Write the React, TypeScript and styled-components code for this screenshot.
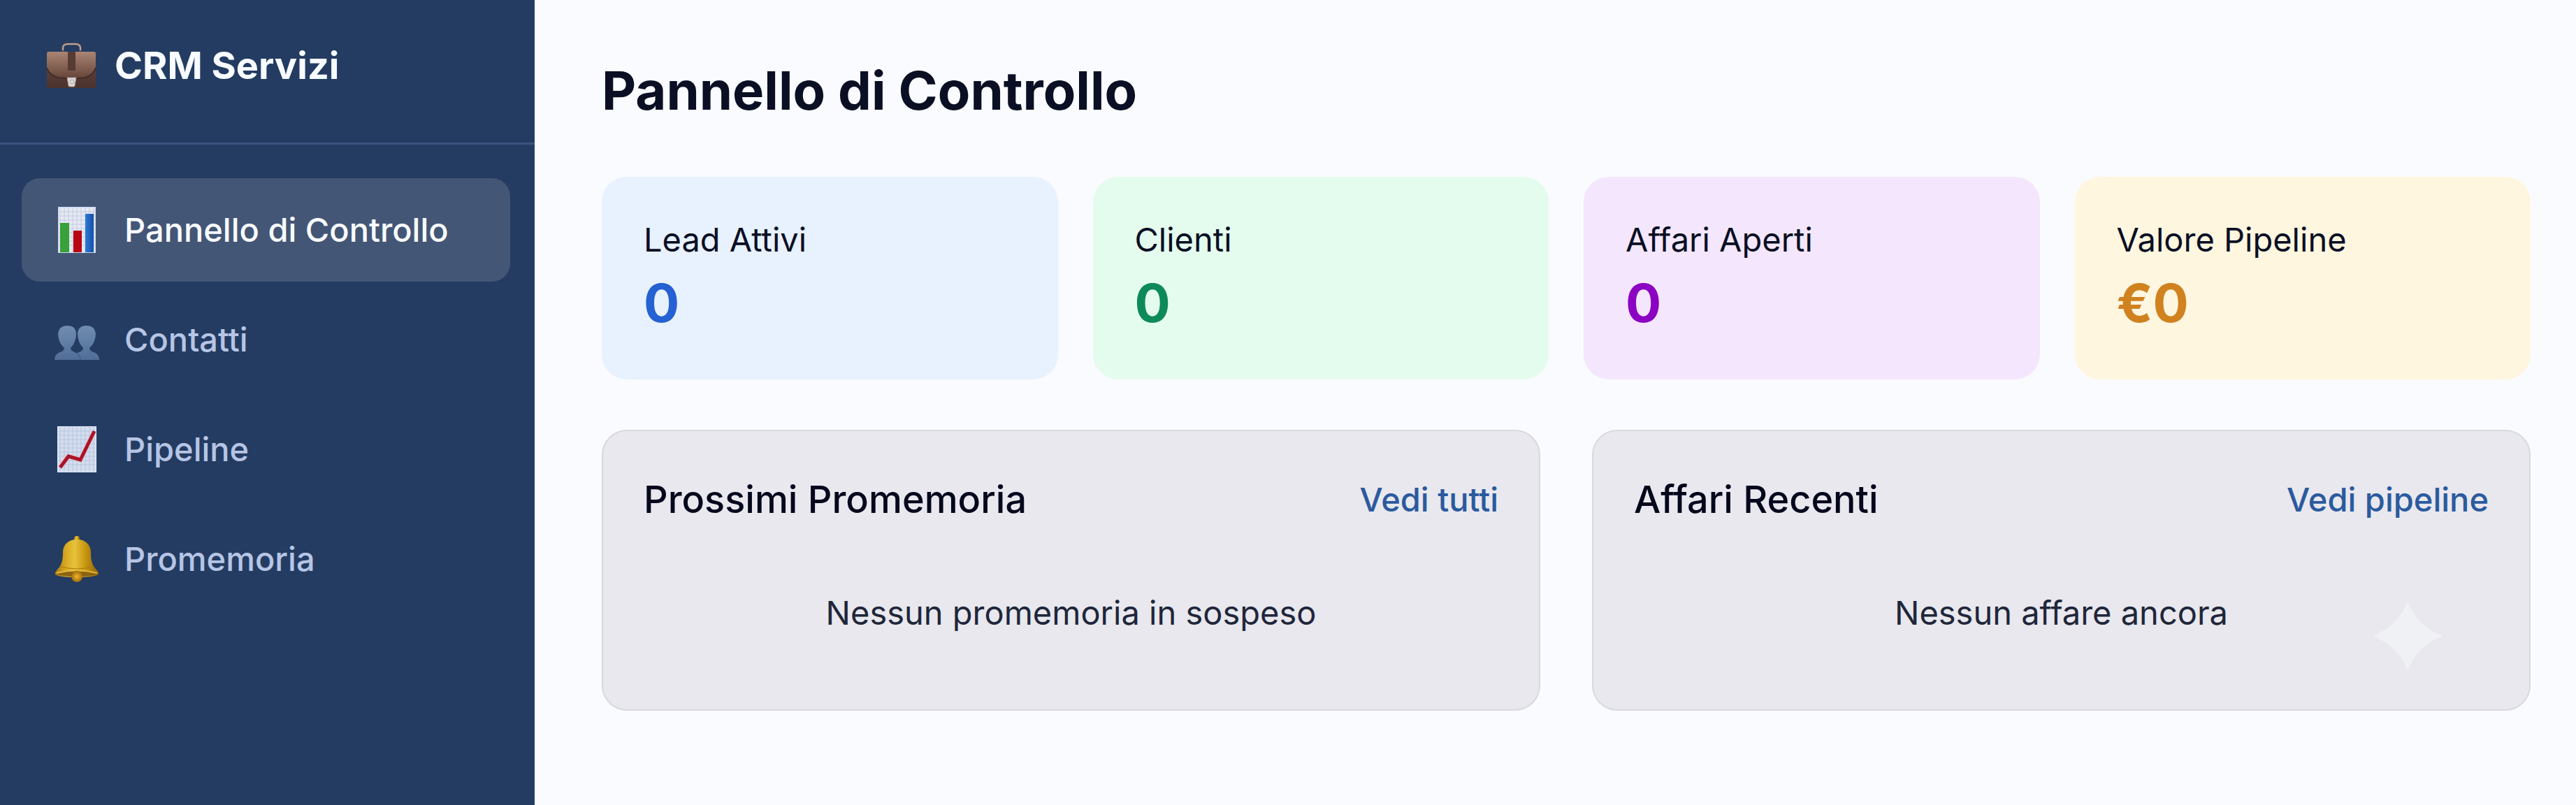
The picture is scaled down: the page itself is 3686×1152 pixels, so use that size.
import React from "react";
import styled, { createGlobalStyle } from "styled-components";

const GlobalStyle = createGlobalStyle`
  *, *::before, *::after { box-sizing: border-box; }
  body {
    margin: 0;
    background: #fafbfe;
    color: #0a0f24;
    font-family: Inter, "Liberation Sans", sans-serif;
  }
`;

const Layout = styled.div`
  display: flex;
  min-height: 100vh;
`;

const Sidebar = styled.aside`
  flex: 0 0 765px;
  background: #243c62;
`;

const Brand = styled.div`
  display: flex;
  align-items: center;
  gap: 26px;
  padding: 60px 66px 76px;
  border-bottom: 3px solid #3c5280;
  color: #f8fbff;
  font-size: 54px;
  font-weight: 700;
  line-height: 68px;
`;

const Nav = styled.nav`
  display: flex;
  flex-direction: column;
  gap: 9px;
  padding: 48px 35px 48px 31px;
`;

const NavItem = styled.a<{ $active?: boolean }>`
  display: flex;
  align-items: center;
  gap: 36px;
  padding: 44px 47px;
  border-radius: 26px;
  background: ${(p) => (p.$active ? "#445675" : "transparent")};
  color: ${(p) => (p.$active ? "#f8fbff" : "#b6c5e5")};
  font-size: 47px;
  font-weight: 500;
  line-height: 60px;
  text-decoration: none;
`;

const Icon = styled.svg`
  flex: none;
  display: block;
  margin: -4px 0;
`;

const Main = styled.main`
  flex: 1;
  min-width: 0;
  padding: 81px 65px 81px 96px;
`;

const PageTitle = styled.h1`
  margin: 0 0 76px;
  font-size: 76px;
  font-weight: 700;
  line-height: 96px;
`;

const StatGrid = styled.section`
  display: grid;
  grid-template-columns: repeat(4, minmax(0, 1fr));
  gap: 50px;
  margin-bottom: 72px;
`;

const StatCard = styled.article<{ $bg: string }>`
  display: flex;
  flex-direction: column;
  gap: 10px;
  padding: 60px;
  border-radius: 36px;
  background: ${(p) => p.$bg};
`;

const StatLabel = styled.span`
  font-size: 47px;
  line-height: 60px;
`;

const StatValue = styled.strong<{ $color: string }>`
  color: ${(p) => p.$color};
  font-size: 76px;
  font-weight: 700;
  line-height: 100px;
`;

const PanelGrid = styled.div`
  display: grid;
  grid-template-columns: repeat(2, minmax(0, 1fr));
  gap: 74px;
`;

const Panel = styled.section`
  position: relative;
  padding: 60px 58px;
  border: 2px solid #d8d8df;
  border-radius: 36px;
  background: #e8e8ee;
`;

const PanelHeader = styled.header`
  display: flex;
  align-items: center;
  justify-content: space-between;
  margin-bottom: 46px;
`;

const PanelTitle = styled.h2`
  margin: 0;
  color: #05081c;
  font-size: 54px;
  font-weight: 500;
  line-height: 76px;
`;

const PanelLink = styled.a`
  color: #2b5a9e;
  font-size: 47px;
  font-weight: 500;
  line-height: 60px;
  text-decoration: none;
`;

const EmptyText = styled.p`
  margin: 0;
  padding: 48px 0;
  color: #20263a;
  font-size: 47px;
  line-height: 60px;
  text-align: center;
`;

const Sparkle = styled.svg`
  position: absolute;
  right: 124px;
  bottom: 56px;
`;

function BriefcaseIcon() {
  return (
    <Icon width="72" height="66" viewBox="0 0 72 66" aria-hidden="true">
      <defs>
        <linearGradient id="case-body" x1="0" y1="0" x2="0" y2="1">
          <stop offset="0" stopColor="#6b4b42" />
          <stop offset="1" stopColor="#4b322d" />
        </linearGradient>
        <linearGradient id="case-flap" x1="0" y1="0" x2="0" y2="1">
          <stop offset="0" stopColor="#a98574" />
          <stop offset="1" stopColor="#664539" />
        </linearGradient>
      </defs>
      <path d="M24 13V8Q24 2 31 2H42Q49 2 49 8V13" fill="none" stroke="#53474c" strokeWidth="4" />
      <path d="M24 11V8Q24 2 31 2H42Q49 2 49 8V11" fill="none" stroke="#b9aaa6" strokeWidth="2" />
      <path d="M1 16Q1 13 4 13H68Q71 13 71 16V65H1Z" fill="url(#case-body)" />
      <path d="M1 16Q1 13 4 13H68Q71 13 71 16V36Q66 51 46 51H27Q6 51 1 36Z" fill="url(#case-flap)" />
      <path d="M1 36Q6 51 27 51H46Q66 51 71 36" fill="none" stroke="#422b28" strokeWidth="2" />
      <path d="M31 13H42V40H31Z" fill="#573c33" />
      <path d="M30 50H43L41 62Q41 63 39 63H34Q32 63 32 62Z" fill="#ded9d8" stroke="#978985" />
      <circle cx="37" cy="56" r="3" fill="none" stroke="#b0a8a8" />
    </Icon>
  );
}

const gridLines = [8, 14, 20, 26, 32, 38, 44, 50, 56];

function PaperGrid({ color }: { color: string }) {
  return (
    <g stroke={color} strokeWidth="1">
      {gridLines.map((n) => (
        <path key={n} d={`M${n} 2V66M6 ${n}H58`} />
      ))}
    </g>
  );
}

function BarChartIcon() {
  return (
    <Icon width="64" height="68" viewBox="0 0 64 68" aria-hidden="true">
      <defs>
        <linearGradient id="bar-blue">
          <stop offset="0" stopColor="#2c7bd4" />
          <stop offset="1" stopColor="#1650aa" />
        </linearGradient>
      </defs>
      <rect x="5" y="1" width="54" height="66" fill="#e5e9f5" />
      <PaperGrid color="#c6ccdd" />
      <rect x="8" y="24" width="13" height="43" fill="#38a139" />
      <rect x="27" y="35" width="12" height="32" fill="#b90612" />
      <rect x="44" y="11" width="12" height="56" fill="url(#bar-blue)" />
      <rect x="5.5" y="1.5" width="53" height="65" fill="none" stroke="#cbd8f1" />
    </Icon>
  );
}

function PeopleIcon() {
  const person =
    "M0 49Q0 41 8 38Q14 36 14 32Q5 24 5 11Q7 0 18 0Q30 0 31 11Q31 24 23 32Q23 36 29 38Q37 41 37 49Z";
  return (
    <Icon width="64" height="68" viewBox="0 -14 64 68" aria-hidden="true">
      <defs>
        <linearGradient id="person" x1="0" y1="0" x2="0" y2="1">
          <stop offset="0" stopColor="#718eb0" />
          <stop offset="1" stopColor="#506d98" />
        </linearGradient>
      </defs>
      <path d={person} transform="translate(64 0) scale(-1 1)" fill="url(#person)" />
      <path d={person} fill="url(#person)" />
      <path d="M29 38Q37 41 37 49" fill="none" stroke="#38557f" strokeWidth="1" />
    </Icon>
  );
}

function LineChartIcon() {
  return (
    <Icon width="64" height="68" viewBox="0 0 64 68" aria-hidden="true">
      <rect x="4" y="1" width="56" height="66" fill="#d3ddef" />
      <PaperGrid color="#b7c5dc" />
      <path d="M8 59L20 44L37 49L57 9" fill="none" stroke="#eac7d1" strokeWidth="7" />
      <path d="M8 60L20 44L37 49L57 8" fill="none" stroke="#a9152a" strokeWidth="5" />
      <rect x="4.5" y="1.5" width="55" height="65" fill="none" stroke="#e4ecfa" />
    </Icon>
  );
}

function BellIcon() {
  return (
    <Icon width="64" height="68" viewBox="0 0 64 68" aria-hidden="true">
      <defs>
        <linearGradient id="bell">
          <stop offset="0" stopColor="#a8791a" />
          <stop offset=".25" stopColor="#d9a91f" />
          <stop offset=".45" stopColor="#e8c23c" />
          <stop offset=".7" stopColor="#c8960f" />
          <stop offset="1" stopColor="#8b610b" />
        </linearGradient>
        <radialGradient id="clapper">
          <stop offset="0" stopColor="#efb72f" />
          <stop offset="1" stopColor="#a16c0a" />
        </radialGradient>
      </defs>
      <circle cx="32" cy="5" r="4" fill="url(#bell)" />
      <path d="M32 6C43 6 51 12 52 23C52 34 53 42 59 48Q64 53 63 56Q58 60 32 60Q6 60 1 56Q0 53 5 48C11 42 12 34 12 23C13 12 21 6 32 6Z" fill="url(#bell)" />
      <path d="M8 45Q32 51 56 45" fill="none" stroke="#a77a12" strokeWidth="1" />
      <ellipse cx="32" cy="55" rx="29" ry="4" fill="#8a6412" />
      <path d="M3 54Q32 47 61 54" fill="none" stroke="#e6bd3d" strokeWidth="2" />
      <circle cx="32" cy="59" r="8" fill="url(#clapper)" />
    </Icon>
  );
}

const navItems = [
  { label: "Pannello di Controllo", icon: <BarChartIcon />, active: true },
  { label: "Contatti", icon: <PeopleIcon /> },
  { label: "Pipeline", icon: <LineChartIcon /> },
  { label: "Promemoria", icon: <BellIcon /> },
];

const stats = [
  { label: "Lead Attivi", value: "0", bg: "#e8f1fe", color: "#2561d3" },
  { label: "Clienti", value: "0", bg: "#e4fcee", color: "#0e8a5a" },
  { label: "Affari Aperti", value: "0", bg: "#f4e7fd", color: "#8c04c3" },
  { label: "Valore Pipeline", value: "€0", bg: "#fef6df", color: "#d0821f" },
];

export default function App() {
  return (
    <>
      <GlobalStyle />
      <Layout>
        <Sidebar>
          <Brand>
            <BriefcaseIcon />
            <span>CRM Servizi</span>
          </Brand>
          <Nav>
            {navItems.map((item) => (
              <NavItem
                key={item.label}
                href="#"
                $active={item.active}
                aria-current={item.active ? "page" : undefined}
              >
                {item.icon}
                <span>{item.label}</span>
              </NavItem>
            ))}
          </Nav>
        </Sidebar>
        <Main>
          <PageTitle>Pannello di Controllo</PageTitle>
          <StatGrid>
            {stats.map((stat) => (
              <StatCard key={stat.label} $bg={stat.bg}>
                <StatLabel>{stat.label}</StatLabel>
                <StatValue $color={stat.color}>{stat.value}</StatValue>
              </StatCard>
            ))}
          </StatGrid>
          <PanelGrid>
            <Panel>
              <PanelHeader>
                <PanelTitle>Prossimi Promemoria</PanelTitle>
                <PanelLink href="#">Vedi tutti</PanelLink>
              </PanelHeader>
              <EmptyText>Nessun promemoria in sospeso</EmptyText>
            </Panel>
            <Panel>
              <PanelHeader>
                <PanelTitle>Affari Recenti</PanelTitle>
                <PanelLink href="#">Vedi pipeline</PanelLink>
              </PanelHeader>
              <EmptyText>Nessun affare ancora</EmptyText>
              <Sparkle width="100" height="98" viewBox="0 0 100 98" aria-hidden="true">
                <path d="M50 0Q64 35 100 49Q64 63 50 98Q36 63 0 49Q36 35 50 0Z" fill="#f0f1f5" />
              </Sparkle>
            </Panel>
          </PanelGrid>
        </Main>
      </Layout>
    </>
  );
}
